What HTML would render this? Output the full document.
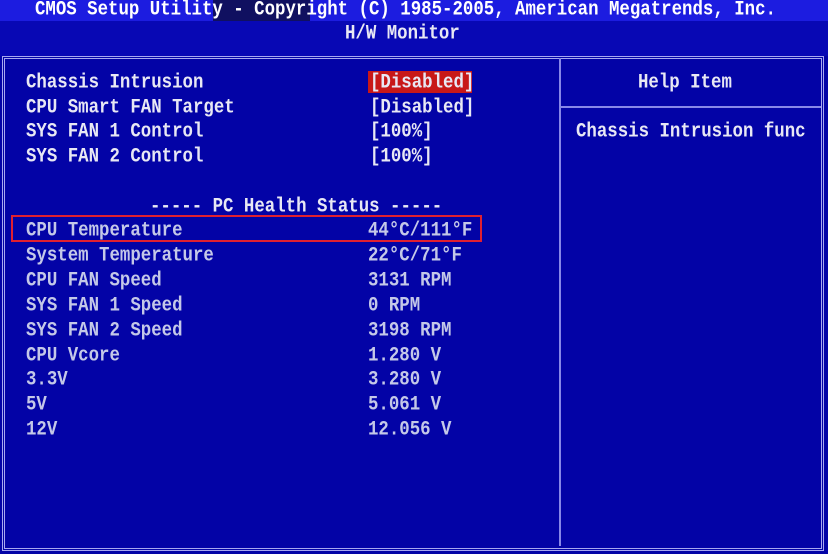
<!DOCTYPE html>
<html><head><style>
body{margin:0;width:828px;height:554px;background:#0303a6;overflow:hidden;position:relative;font-family:"Liberation Mono",monospace;font-weight:bold;}
.t{position:absolute;font-size:17.4px;line-height:20px;white-space:pre;transform:scaleY(1.15);transform-origin:0 50%;}
.w{color:#e8e8f4}.g{color:#c4c8e8}
</style></head><body>
<div style="position:absolute;left:0;top:0;width:828px;height:21px;background:#1c1ce0"></div>
<div style="position:absolute;left:213px;top:0;width:97px;height:21px;background:#101060"></div>
<div class="t w" style="left:35px;top:1px;color:#fff">CMOS Setup Utility - Copyright (C) 1985-2005, American Megatrends, Inc.</div>
<div style="position:absolute;left:0;top:21px;width:828px;height:35px;background:#0808b4"></div>
<div class="t w" style="left:345px;top:25px">H/W Monitor</div>
<div style="position:absolute;left:2px;top:56px;width:816px;height:489px;border:3px double #a8a8f0"></div>
<div style="position:absolute;left:559px;top:58px;width:2px;height:488px;background:#8888e8"></div>
<div style="position:absolute;left:561px;top:106px;width:260px;height:2px;background:#8888e8"></div>
<div style="position:absolute;left:368px;top:71px;width:104px;height:22px;background:#c81818"></div>
<div style="position:absolute;left:11px;top:215px;width:467px;height:23px;border:2px solid #e02030"></div>
<div class="t w" style="left:26px;top:74px">Chassis Intrusion</div>
<div class="t w" style="left:370px;top:74px">[Disabled]</div>
<div class="t w" style="left:26px;top:99px">CPU Smart FAN Target</div>
<div class="t w" style="left:370px;top:99px">[Disabled]</div>
<div class="t w" style="left:26px;top:123px">SYS FAN 1 Control</div>
<div class="t w" style="left:370px;top:123px">[100%]</div>
<div class="t w" style="left:26px;top:148px">SYS FAN 2 Control</div>
<div class="t w" style="left:370px;top:148px">[100%]</div>
<div class="t w" style="left:150px;top:198px">----- PC Health Status -----</div>
<div class="t g" style="left:26px;top:222px">CPU Temperature</div><div class="t g" style="left:368px;top:222px">44°C/111°F</div>
<div class="t g" style="left:26px;top:247px">System Temperature</div><div class="t g" style="left:368px;top:247px">22°C/71°F</div>
<div class="t g" style="left:26px;top:272px">CPU FAN Speed</div><div class="t g" style="left:368px;top:272px">3131 RPM</div>
<div class="t g" style="left:26px;top:297px">SYS FAN 1 Speed</div><div class="t g" style="left:368px;top:297px">0 RPM</div>
<div class="t g" style="left:26px;top:322px">SYS FAN 2 Speed</div><div class="t g" style="left:368px;top:322px">3198 RPM</div>
<div class="t g" style="left:26px;top:347px">CPU Vcore</div><div class="t g" style="left:368px;top:347px">1.280 V</div>
<div class="t g" style="left:26px;top:371px">3.3V</div><div class="t g" style="left:368px;top:371px">3.280 V</div>
<div class="t g" style="left:26px;top:396px">5V</div><div class="t g" style="left:368px;top:396px">5.061 V</div>
<div class="t g" style="left:26px;top:421px">12V</div><div class="t g" style="left:368px;top:421px">12.056 V</div>
<div class="t w" style="left:638px;top:74px">Help Item</div>
<div class="t w" style="left:576px;top:123px">Chassis Intrusion func</div>
</body></html>
